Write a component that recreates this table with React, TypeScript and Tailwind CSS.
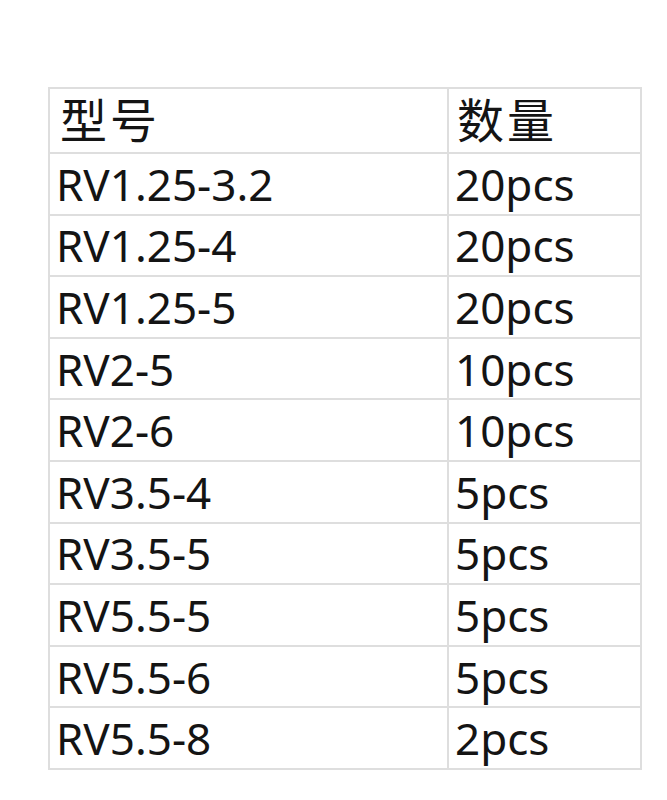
const rows: [string, string][] = [
  ['RV1.25-3.2', '20pcs'],
  ['RV1.25-4', '20pcs'],
  ['RV1.25-5', '20pcs'],
  ['RV2-5', '10pcs'],
  ['RV2-6', '10pcs'],
  ['RV3.5-4', '5pcs'],
  ['RV3.5-5', '5pcs'],
  ['RV5.5-5', '5pcs'],
  ['RV5.5-6', '5pcs'],
  ['RV5.5-8', '2pcs'],
];

export default function App() {
  return (
    <div
      className="w-[667px] h-[800px] bg-white pt-[87px] pl-[48px]"
      style={{ fontFamily: '"Noto Sans", "Noto Sans CJK SC", sans-serif' }}
    >
      <table className="border-collapse text-[#141414] text-[44px] leading-none">
        <tbody>
          <tr className="h-[65px]">
            <td className="w-[399px] border-2 border-[#dedede] pl-[10px] align-middle text-[47px] tracking-[3px]">型号</td>
            <td className="w-[193px] border-2 border-[#dedede] pl-[8px] align-middle text-[47px] tracking-[3px]">数量</td>
          </tr>
          {rows.map(([model, qty]) => (
            <tr key={model} className="h-[61.6px]">
              <td className="border-2 border-[#dedede] pl-[6px] align-middle">{model}</td>
              <td className="border-2 border-[#dedede] pl-[6px] align-middle">{qty}</td>
            </tr>
          ))}
        </tbody>
      </table>
    </div>
  );
}
